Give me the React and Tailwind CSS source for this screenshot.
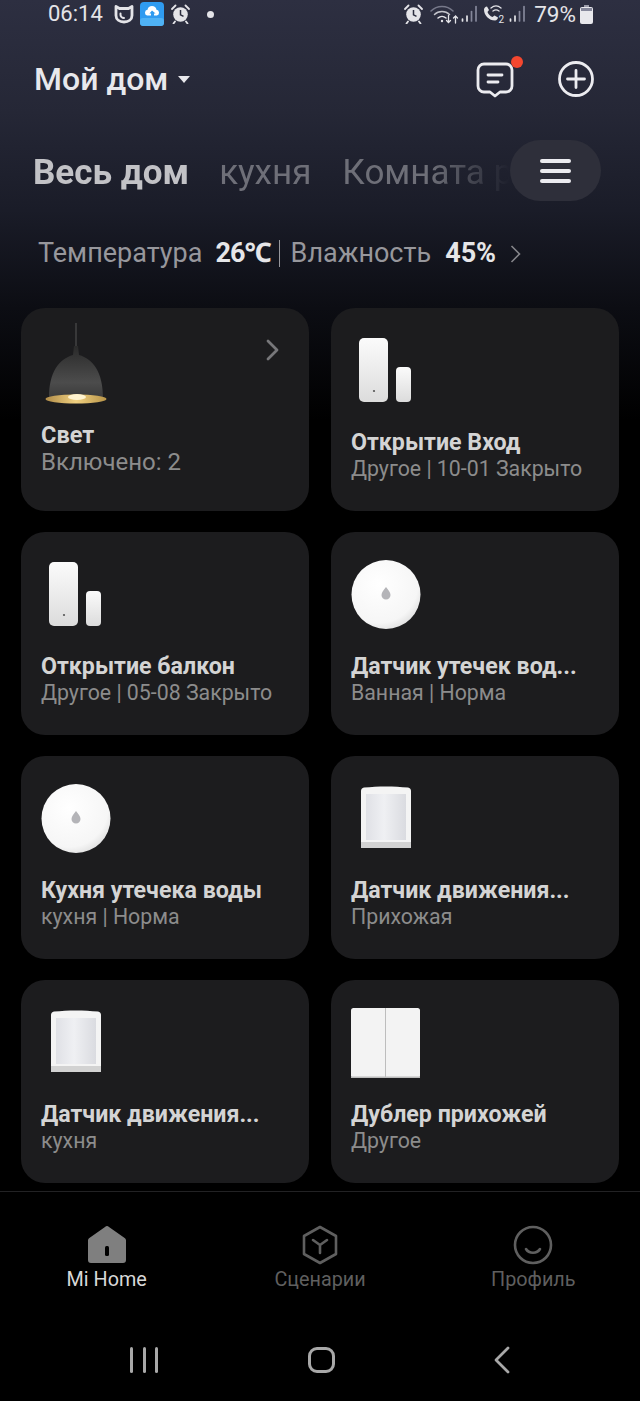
import React from "react";

const FONT = "font-['Roboto','Noto_Sans',sans-serif]";

// status bar glyphs
const MiIcon = () => (
  <svg width="20" height="20" viewBox="0 0 20 20" fill="none" stroke="#e4e4e8" strokeWidth="2.800" strokeLinejoin="round" strokeLinecap="round">
    <path d="M2 2.500l3.500 2h9l3.500-2v9c0 4-3.500 6.500-8 6.500s-8-2.500-8-6.500z" />
    <path d="M6.500 9.500v1.500c0 1.500 1.500 3 3.500 3" strokeWidth="2" />
  </svg>
);

const CloudApp = () => (
  <svg width="24" height="24" viewBox="0 0 24 24">
    <rect width="24" height="24" rx="4" fill="#2f9bf0" />
    <rect y="16" width="24" height="8" rx="3" fill="#4fb2f5" />
    <path d="M7 13.500a3 3 0 0 1 .5-5.800 4.600 4.600 0 0 1 9 0 3 3 0 0 1 .5 5.800h-3v-2h1.600L12 8.500l-2.600 3H11v2z" fill="#fff" />
  </svg>
);

const Alarm = () => (
  <svg width="19" height="20" viewBox="0 0 19 20">
    <circle cx="9.500" cy="10.500" r="7.300" fill="#e4e4e8" />
    <path d="M1 5l3.500-3.500M18 5l-3.500-3.500M4 17.500l-1.500 2M15 17.500l1.500 2" stroke="#e4e4e8" strokeWidth="1.800" strokeLinecap="round" />
    <path d="M9.500 6v4.800l3 1.600" stroke="#2b2d3e" strokeWidth="1.500" fill="none" />
  </svg>
);

const Wifi = () => (
  <svg width="30" height="20" viewBox="0 0 30 20" fill="none" strokeLinecap="round">
    <path d="M1 7c6-6 16-6 22 0" stroke="#77798a" strokeWidth="1.500" />
    <path d="M4.500 10.500c4-4 11-4 15 0" stroke="#c4c5cc" strokeWidth="1.500" />
    <path d="M8 14c2.300-2 5.700-2 8 0" stroke="#e4e4e8" strokeWidth="1.500" />
    <circle cx="12" cy="17" r="1.200" fill="#e4e4e8" />
    <path d="M18.500 11.500v7m-2-2l2 2 2-2M25.500 19v-7m-2 2l2-2 2 2" stroke="#e4e4e8" strokeWidth="1.300" />
  </svg>
);

const Signal = () => (
  <svg width="17" height="20" viewBox="0 0 17 20" fill="none" strokeLinecap="round" strokeWidth="1.700">
    <path d="M1.500 17v-2" stroke="#e4e4e8" />
    <path d="M6 17v-5" stroke="#e4e4e8" />
    <path d="M10.500 17V7.500" stroke="#85879a" />
    <path d="M15 17V2.500" stroke="#85879a" />
  </svg>
);

const CallWifi = () => (
  <svg width="22" height="20" viewBox="0 0 22 20" fill="none">
    <path d="M1 5.500c0-1.500 1.500-3 3-3l2 3.500-1.500 2c1 2.500 2.500 4 5 5l2-1.500 3.500 2c0 1.500-1.500 3-3 3C6 16.500 1 11.500 1 5.500z" fill="#e4e4e8" />
    <path d="M8 4c3-2.500 7-2.500 10 0M10 7c2-1.500 4-1.500 6 0" stroke="#e4e4e8" strokeWidth="1.300" strokeLinecap="round" />
    <text x="15.500" y="18.500" fill="#e4e4e8" fontSize="10" fontFamily="Roboto">2</text>
  </svg>
);

const Battery = () => (
  <svg width="13" height="19" viewBox="0 0 13 19">
    <rect x="4" y="0" width="5" height="2.500" fill="#9b9caa" />
    <rect x="0" y="2" width="13" height="17" rx="2" fill="#e8e8ec" />
    <rect x="1" y="3" width="11" height="3" fill="#85879a" />
  </svg>
);

// header + bottom bar icons
const MessageIcon = () => (
  <svg width="38" height="36" viewBox="0 0 38 36" fill="none" stroke="#ececf0" strokeWidth="2.800" strokeLinecap="round" strokeLinejoin="round">
    <path d="M8 2h22a6 6 0 0 1 6 6v16a6 6 0 0 1-6 6h-6l-5 4-5-4H8a6 6 0 0 1-6-6V8a6 6 0 0 1 6-6z" />
    <path d="M12 13h14M12 20h10" />
  </svg>
);

const PlusCircle = () => (
  <svg width="36" height="36" viewBox="0 0 36 36" fill="none" stroke="#ececf0" strokeWidth="2.800" strokeLinecap="round">
    <circle cx="18" cy="18" r="16.500" />
    <path d="M18 9.500v17M9.500 18h17" />
  </svg>
);

const HomeIcon = () => (
  <svg width="40" height="38" viewBox="0 0 40 38">
    <path d="M1 14.500a3 3 0 0 1 1-2.200L18 1a3 3 0 0 1 4 0l16 11.300a3 3 0 0 1 1 2.200V34a3 3 0 0 1-3 3H4a3 3 0 0 1-3-3z" fill="#7f7f7f" />
    <rect x="18" y="20" width="4" height="10" rx="1.500" fill="#000" />
  </svg>
);

const SceneIcon = () => (
  <svg width="38" height="40" viewBox="0 0 38 40" fill="none" stroke="#5f5f5f" strokeWidth="2.600" strokeLinejoin="round" strokeLinecap="round">
    <path d="M19 2l16 9v18l-16 9-16-9V11z" />
    <path d="M12 15l7 5 7-5M19 20v8" />
  </svg>
);

const ProfileIcon = () => (
  <svg width="40" height="40" viewBox="0 0 40 40" fill="none" stroke="#5f5f5f" strokeWidth="2.600" strokeLinecap="round">
    <circle cx="20" cy="20" r="18" />
    <path d="M13 24c3 5 11 5 14 0" />
  </svg>
);

// device pictures, all drawn in the same 80x90 box
const Lamp = () => (
  <svg width="80" height="90" viewBox="0 0 80 90">
    <defs>
      <linearGradient id="dome" x1="0" y1="0" x2="0" y2="1">
        <stop offset="0" stopColor="#2a2a2a" />
        <stop offset="0.7" stopColor="#4c4c4c" />
        <stop offset="1" stopColor="#3a3a3a" />
      </linearGradient>
      <linearGradient id="gold" x1="0" y1="0" x2="1" y2="0">
        <stop offset="0" stopColor="#b08c48" />
        <stop offset="0.5" stopColor="#f0d080" />
        <stop offset="1" stopColor="#b89448" />
      </linearGradient>
    </defs>
    <path d="M35 1v24" stroke="#555" strokeWidth="1" />
    <path d="M33 24h4l1 9C52 37 62 50 62 76H8C8 50 18 37 32 33z" fill="url(#dome)" />
    <ellipse cx="35" cy="77" rx="30.500" ry="4.500" fill="url(#gold)" />
    <ellipse cx="36" cy="75" rx="9" ry="3" fill="#fff3cf" />
  </svg>
);

const DoorSensor = () => (
  <svg width="80" height="90" viewBox="0 0 80 90">
    <defs>
      <linearGradient id="door" x1="0" y1="0" x2="0" y2="1">
        <stop offset="0" stopColor="#fbfbfb" />
        <stop offset="1" stopColor="#dcdcdc" />
      </linearGradient>
    </defs>
    <rect x="8" y="16" width="29" height="64" rx="5" fill="url(#door)" />
    <rect x="45" y="45" width="15" height="35" rx="4" fill="url(#door)" />
    <circle cx="23" cy="69" r="1.100" fill="#555" />
  </svg>
);

const WaterSensor = () => (
  <svg width="80" height="90" viewBox="0 0 80 90">
    <defs>
      <radialGradient id="water" cx="0.4" cy="0.35" r="0.75">
        <stop offset="0" stopColor="#ffffff" />
        <stop offset="0.75" stopColor="#f6f6f6" />
        <stop offset="1" stopColor="#d8d8d8" />
      </radialGradient>
    </defs>
    <circle cx="35" cy="48.500" r="34.500" fill="url(#water)" />
    <path d="M35 41c2 3 4.500 5 4.500 8a4.500 4.500 0 0 1-9 0c0-3 2.500-5 4.500-8z" fill="#b4b4b8" />
  </svg>
);

const MotionSensor = () => (
  <svg width="80" height="90" viewBox="0 0 80 90">
    <defs>
      <linearGradient id="lens" x1="0" y1="0" x2="1" y2="0">
        <stop offset="0" stopColor="#e0e1e6" />
        <stop offset="0.45" stopColor="#eff0f3" />
        <stop offset="1" stopColor="#dadbe0" />
      </linearGradient>
    </defs>
    <path d="M10 21c0-2 1-3 3-3.500 14-1.500 30-1.500 44 0 2 .5 3 1.500 3 3.500v57H10z" fill="#f4f4f4" />
    <rect x="15" y="24" width="40" height="46" fill="url(#lens)" />
    <rect x="10" y="72" width="50" height="6" fill="#d2d2d2" />
  </svg>
);

const WallSwitch = () => (
  <svg width="80" height="90" viewBox="0 0 80 90">
    <rect x="0" y="14" width="69" height="70" rx="2.500" fill="#f3f3f3" />
    <rect x="0" y="82.500" width="69" height="1.500" fill="#bcbcbc" />
    <path d="M34.500 14v70" stroke="#bdbdbd" strokeWidth="1" />
  </svg>
);

const cards = [
  { title: "Свет", sub: "Включено: 2", Icon: Lamp, arrow: true },
  { title: "Открытие Вход", sub: "Другое | 10-01 Закрыто", Icon: DoorSensor },
  { title: "Открытие балкон", sub: "Другое | 05-08 Закрыто", Icon: DoorSensor },
  { title: "Датчик утечек вод...", sub: "Ванная | Норма", Icon: WaterSensor },
  { title: "Кухня утечека воды", sub: "кухня | Норма", Icon: WaterSensor },
  { title: "Датчик движения...", sub: "Прихожая", Icon: MotionSensor },
  { title: "Датчик движения...", sub: "кухня", Icon: MotionSensor },
  { title: "Дублер прихожей", sub: "Другое", Icon: WallSwitch },
];

function DeviceCard({ title, sub, Icon, arrow }) {
  return (
    <div className={`relative h-[203px] rounded-[24px] bg-[#1c1c1e] pl-5 pt-[14px] flex flex-col ${arrow ? "pb-[35px]" : "pb-[30px]"}`}>
      <Icon />
      <div className="mt-auto">
        <div className={`font-bold text-[#d4d4d4] ${arrow ? "text-[23.500px] leading-[27px]" : "text-[23.200px] leading-[26px] -translate-y-px"}`}>{title}</div>
        <div className={`text-[#8c8c8c] ${arrow ? "text-[24px] leading-[27px]" : "text-[21.300px] leading-[25px]"}`}>{sub}</div>
      </div>
      {arrow && (
        <svg className="absolute left-[245px] top-[31px]" width="14" height="22" viewBox="0 0 14 22" fill="none" stroke="#77777a" strokeWidth="2.800" strokeLinecap="round" strokeLinejoin="round">
          <path d="M2 2l9 9-9 9" />
        </svg>
      )}
    </div>
  );
}

function NavItem({ icon, label, active }) {
  return (
    <div className="flex-1 flex flex-col items-center">
      <div className="h-[40px] flex items-center justify-center">{icon}</div>
      <div className={`mt-[3px] text-[19.800px] leading-[24px] ${active ? "text-[#d8d8d8]" : "text-[#5f5f5f]"}`}>{label}</div>
    </div>
  );
}

export default function App() {
  return (
    <div className={`${FONT} w-[640px] h-[1401px] overflow-hidden flex flex-col bg-[linear-gradient(180deg,#2d2f41_0%,#252736_8%,#1a1c28_15%,#0c0d13_22%,#000_30%)]`}>
      {/* status bar */}
      <div className="h-[28px] flex items-center pl-[48px] pr-[47px] text-[#e4e4e8] text-[22px]">
        <span className="leading-none">06:14</span>
        <div className="ml-[11px]"><MiIcon /></div>
        <div className="ml-[6px]"><CloudApp /></div>
        <div className="ml-[7px]"><Alarm /></div>
        <div className="ml-[17px] w-[7px] h-[7px] rounded-full bg-[#e4e4e8]" />
        <div className="ml-auto flex items-center">
          <Alarm />
          <div className="ml-[7px]"><Wifi /></div>
          <div className="ml-[1px]"><Signal /></div>
          <div className="ml-[5px]"><CallWifi /></div>
          <div className="ml-[4px]"><Signal /></div>
          <span className="ml-[8px] leading-none text-[22.500px]">79%</span>
          <div className="ml-[4px]"><Battery /></div>
        </div>
      </div>

      {/* home selector + actions */}
      <div className="h-[102px] flex items-center pl-[34px] pr-[46px]">
        <span className="text-[32px] font-medium text-[#e8e8ec] leading-none">Мой дом</span>
        <svg className="ml-[10px]" width="12" height="7" viewBox="0 0 12 7"><path d="M0 0h12L6 7z" fill="#e8e8ec" /></svg>
        <div className="ml-auto relative mt-[1px]">
          <MessageIcon />
          <div className="absolute -top-[6px] -right-[9px] w-[12px] h-[12px] rounded-full bg-[#f4472f]" />
        </div>
        <div className="ml-[44px]"><PlusCircle /></div>
      </div>

      {/* room tabs */}
      <div className="relative h-[84px]">
        <div className="h-full flex items-center pl-[33px] overflow-hidden whitespace-nowrap text-[35px] leading-none [mask-image:linear-gradient(90deg,#000_430px,transparent_510px)]">
          <span className="font-bold text-[#c2c2c6]">Весь дом</span>
          <span className="ml-[30px] text-[#6e6f78]">кухня</span>
          <span className="ml-[31px] text-[#6e6f78]">Комната</span>
          <span className="ml-[9px] text-[#6e6f78]">ребенка</span>
        </div>
        <div className="absolute left-[510px] top-[10px] w-[91px] h-[61px] rounded-full bg-[#2e2f3a] flex flex-col items-center justify-center gap-[6px]">
          <div className="w-[31px] h-[4px] rounded-full bg-[#ececf0]" />
          <div className="w-[31px] h-[4px] rounded-full bg-[#ececf0]" />
          <div className="w-[31px] h-[4px] rounded-full bg-[#ececf0]" />
        </div>
      </div>

      {/* climate summary */}
      <div className="h-[76px] pt-[3px] flex items-center pl-[38px] text-[27px] leading-none text-[#97979c]">
        <span>Температура</span>
        <span className="ml-[13px] font-bold text-[#e6e6e8] tracking-[-1px]">26℃</span>
        <span className="ml-[8px] w-[1px] h-[27px] bg-[#97979c]" />
        <span className="ml-[11px]">Влажность</span>
        <span className="ml-[14px] font-bold text-[#e6e6e8]">45%</span>
        <svg className="ml-[14px]" width="11" height="18" viewBox="0 0 11 18" fill="none" stroke="#85858a" strokeWidth="1.600"><path d="M1.500 1l8 8-8 8" /></svg>
      </div>

      {/* device grid */}
      <div className="mt-[18px] px-[21px] grid grid-cols-2 gap-x-[22px] gap-y-[21px]">
        {cards.map((c, i) => <DeviceCard key={i} {...c} />)}
      </div>

      {/* bottom nav */}
      <div className="mt-[8px] border-t border-[#222224] pt-[33px] flex">
        <NavItem icon={<HomeIcon />} label="Mi Home" active />
        <NavItem icon={<SceneIcon />} label="Сценарии" />
        <NavItem icon={<ProfileIcon />} label="Профиль" />
      </div>

      {/* android nav */}
      <div className="mt-[54px] flex items-center pl-[130px] h-[28px]">
        <div className="flex gap-[9.500px]">
          <div className="w-[3px] h-[26px] bg-[#a8a8a8] rounded-full" />
          <div className="w-[3px] h-[26px] bg-[#a8a8a8] rounded-full" />
          <div className="w-[3px] h-[26px] bg-[#a8a8a8] rounded-full" />
        </div>
        <div className="ml-[150px] w-[27px] h-[26px] rounded-[9px] border-[3px] border-[#a8a8a8]" />
        <svg className="ml-[159px]" width="16" height="28" viewBox="0 0 16 28" fill="none" stroke="#a8a8a8" strokeWidth="2.800" strokeLinecap="round" strokeLinejoin="round"><path d="M14 2L2 14l12 12" /></svg>
      </div>
    </div>
  );
}
